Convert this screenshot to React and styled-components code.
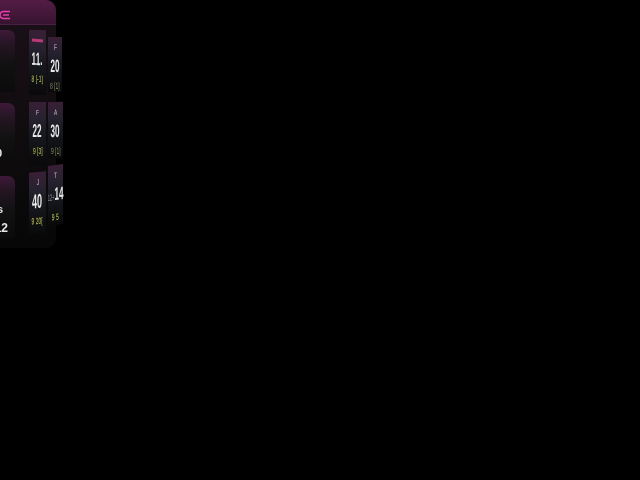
import React from 'react';
import styled, { createGlobalStyle } from 'styled-components';

const Global = createGlobalStyle`
  html, body {
    margin: 0;
    height: 100%;
    background: #000;
    overflow: hidden;
    font-family: "Liberation Sans", Arial, sans-serif;
  }
`;

const Panel = styled.div`
  width: 156px;
  height: 248px;
  margin-left: -100px;
  border-radius: 0 10px 10px 0;
  background: linear-gradient(180deg, #1c1019 0%, #0f0c0e 55%, #070707 100%);
  filter: blur(0.4px);
`;

const Header = styled.div`
  height: 25px;
  padding: 6px 0 0 99px;
  box-sizing: border-box;
  border-radius: 0 10px 0 0;
  border-bottom: 1px solid #4c2044;
  background: linear-gradient(180deg, #541c46 0%, #37142f 100%);
`;

const Rows = styled.div`
  display: flex;
  flex-direction: column;
  padding-top: 5px;
`;

const Row = styled.div`
  display: flex;
  height: 73px;
`;

const Card = styled.div`
  width: 115px;
  height: 62px;
  flex: none;
  margin-right: 14px;
  padding-top: 14px;
  box-sizing: border-box;
  border-radius: 0 7px 0 0;
  background: linear-gradient(180deg, #3e1938 0%, #241522 24%, #121112 55%, #0b0b0b 100%);
  color: #e8e8e8;
  text-align: right;
`;

const CardValue = styled.div`
  padding-right: ${p => p.$pad}px;
  margin-top: ${p => p.$top}px;
  font-size: ${p => p.$size}px;
  font-weight: bold;
  line-height: 14px;
`;

const Tile = styled.div`
  width: ${p => p.$w}px;
  height: ${p => p.$h}px;
  margin-top: ${p => p.$top}px;
  margin-right: 2px;
  flex: none;
  text-align: center;
  background: linear-gradient(180deg, #3a1f36 0%, #272230 26%, #15181d 55%, #09090a 100%);
  transform: skewY(${p => p.$skew}deg);
  display: flex;
  flex-direction: column;
  align-items: center;
`;

const Month = styled.div`
  height: 9px;
  margin-top: 6px;
  font-size: 8px;
  line-height: 9px;
  color: #c9c4cc;
  transform: scaleX(0.6);
`;

const Flag = styled.div`
  width: 11px;
  height: 3px;
  margin-top: 9px;
  margin-bottom: 3px;
  background: #b93a78;
  transform: rotate(4deg);
`;

const Day = styled.div`
  margin-top: 5px;
  font-size: ${p => p.$size || 18}px;
  line-height: 18px;
  font-weight: bold;
  color: #e8e8e8;
  white-space: nowrap;
  transform: scaleX(0.45);
`;

const Small = styled.span`
  font-size: 9px;
  font-weight: normal;
  color: #8d8f95;
`;

const Note = styled.div`
  margin-top: 7px;
  font-size: 9px;
  line-height: 9px;
  color: ${p => (p.$dim ? '#8f9168' : '#c6ca58')};
  white-space: nowrap;
  transform: scaleX(0.55);
`;

const rows = [
  {
    value: '', size: 11, top: 0,
    tiles: [
      { w: 17, h: 65, top: 0, skew: 2, flag: true, day: '11.', note: '8 [-1]' },
      { w: 14, h: 55, top: 7, skew: -1, month: 'F', day: '20', note: '8 [1]', dim: true },
    ],
  },
  {
    value: '0', size: 11, top: 29,
    tiles: [
      { w: 17, h: 63, top: -1, skew: 0, month: 'F', day: '22', note: '9 [3]' },
      { w: 15, h: 56, top: -1, skew: -1, month: 'A', day: '30', note: '9 [1]', dim: true },
    ],
  },
  {
    value: '', size: 13, top: 0,
    tiles: [
      { w: 17, h: 62, top: -4, skew: -5, month: 'J', day: '40', note: '9 20[', big: true },
      { w: 15, h: 60, top: -11, skew: -7, month: 'T', day: '14', prefix: '12+', note: '9 5' },
    ],
  },
];

function TileItem({ t }) {
  return (
    <Tile $w={t.w} $h={t.h} $top={t.top} $skew={t.skew}>
      {t.flag ? <Flag /> : <Month>{t.month}</Month>}
      <Day $size={t.big ? 20 : 18}>
        {t.prefix && <Small>{t.prefix}</Small>}
        {t.day}
      </Day>
      <Note $dim={t.dim}>{t.note}</Note>
    </Tile>
  );
}

export default function App() {
  return (
    <>
      <Global />
      <Panel>
        <Header>
          <svg width="12" height="10" viewBox="0 0 12 10" fill="none">
            <path d="M11 1.5H4.5a3.5 3.5 0 0 0 0 7H11" stroke="#e840b0" strokeWidth="1.6" />
            <path d="M4 5h6" stroke="#e840b0" strokeWidth="1.4" />
          </svg>
        </Header>
        <Rows>
          {rows.map((r, i) => (
            <Row key={i}>
              <Card>
                {i === 2 ? (
                  <>
                    <CardValue $pad={12} $top={13} $size={10}>s</CardValue>
                    <CardValue $pad={7} $top={4} $size={12}>12</CardValue>
                  </>
                ) : (
                  <CardValue $pad={13} $top={r.top} $size={r.size}>{r.value}</CardValue>
                )}
              </Card>
              {r.tiles.map((t, j) => <TileItem key={j} t={t} />)}
            </Row>
          ))}
        </Rows>
      </Panel>
    </>
  );
}
